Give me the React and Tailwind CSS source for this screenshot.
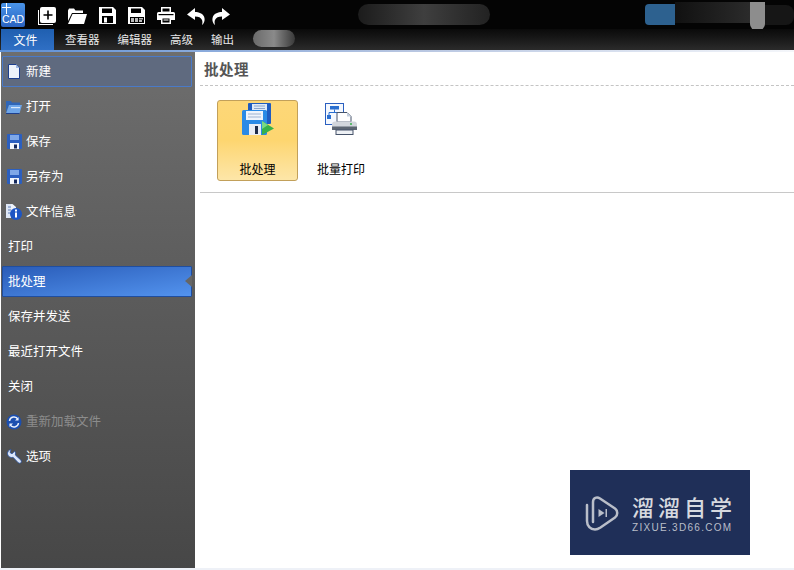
const cjk = "font-['Noto_Sans_CJK_SC',sans-serif]"

function CadLogo() {
    return (
        <div className="w-[24px] h-[24px] rounded-[2px] bg-gradient-to-b from-[#4a94e8] to-[#2a62c0] relative overflow-hidden ml-[1px] mt-[3px] shrink-0">
            <div className="absolute left-[5px] top-0 w-[1px] h-[11px] bg-white"></div>
            <div className="absolute left-[1px] top-[4px] w-[9px] h-[1px] bg-white"></div>
            <p className="absolute left-[1px] top-[10px] text-[10.500px] leading-[13px] text-white font-['Liberation_Sans',sans-serif]">CAD</p>
        </div>
    )
}

function NewIcon() {
    return (
        <svg width="18" height="18" viewBox="0 0 18 18">
            <path d="M0 3v15h15v-1H1V3z" fill="#fff" />
            <rect x="2" y="0" width="16" height="16" rx="2" fill="#fff" />
            <path d="M9.2 3.5h1.6v3.7h3.7v1.6h-3.7v3.7H9.2V8.8H5.5V7.2h3.7z" fill="#000" />
        </svg>
    )
}

function OpenIcon() {
    return (
        <svg width="19" height="16" viewBox="0 0 19 16">
            <path d="M0 2.5 1 .5h5l1.5 2H15v2.500H4L0 13z" fill="#fff" />
            <path d="M4.500 6H19l-3 10H0z" fill="#fff" />
        </svg>
    )
}

function SaveIcon({ pdf }) {
    return (
        <svg width="17" height="17" viewBox="0 0 17 17">
            <path d="M0 0h14l3 3v14H0z" fill="#fff" />
            <rect x="3" y="1.500" width="10" height="4.500" fill="#000" />
            {pdf
                ? <rect x="2" y="10" width="14" height="6" fill="#000" />
                : <rect x="3" y="9" width="11" height="7" fill="#000" />}
            {pdf
                ? <path d="M3 11h3v4H3zM7 11h3v4H7zM11 11h4v1.500h-4zM11 13h3v2h-3z" fill="#bbb" />
                : <rect x="5" y="10.500" width="3" height="5" fill="#fff" />}
        </svg>
    )
}

function PrintIcon() {
    return (
        <svg width="18" height="17" viewBox="0 0 18 17">
            <path d="M4 0h10v5H4zM1.500 5h15A1.500 1.500 0 0 1 18 6.500V13h-4v-2H4v2H0V6.500A1.500 1.500 0 0 1 1.500 5z" fill="#fff" />
            <rect x="5.500" y="1.500" width="7" height="3" fill="#000" />
            <path d="M4 10h10v7H4z" fill="#fff" />
            <rect x="5.500" y="11.500" width="7" height="4" fill="#000" />
            <rect x="6.500" y="12.500" width="5" height="1" fill="#fff" />
            <rect x="1.500" y="7" width="15" height="1.200" fill="#000" />
        </svg>
    )
}

function UndoIcon({ flip }) {
    return (
        <svg width="18" height="18" viewBox="0 0 18 18" className={flip ? "-scale-x-100" : ""}>
            <path d="M8 1 0 7.500 8 13V9.500c3.500 0 6 1 7 3.500.6 1.500.5 3 0 5 2.500-2 3.300-5.500 2-8.500C15.700 6.500 12 5 8 5z" fill="#fff" />
        </svg>
    )
}

function DocIcon() {
    return (
        <svg width="12" height="15" viewBox="0 0 12 15">
            <path d="M.5.5H8L11.500 4v10.500H.5z" fill="#eef3fb" stroke="#1d3f8f" />
            <path d="M8 .5V4h3.500z" fill="#9db8e6" />
        </svg>
    )
}

function FolderIcon() {
    return (
        <svg width="16" height="14" viewBox="0 0 16 14">
            <path d="M0 1h5l1 1.500h8V5H3L0 13z" fill="#2f66b8" />
            <path d="M3 5h13l-2.500 8.500H0z" fill="#6ea6ea" />
            <path d="M5 7h9v1.200H5z" fill="#d8e8fb" />
            <path d="M0 13h13.500v1H0z" fill="#1d3f8f" />
        </svg>
    )
}

function DiskIcon() {
    return (
        <svg width="15" height="15" viewBox="0 0 15 15">
            <rect width="15" height="15" rx="1" fill="#2b5fc0" />
            <rect x="3" y="1" width="9" height="5" fill="#7fa8e8" />
            <rect x="3" y="9" width="9" height="6" fill="#f2f6fc" />
            <rect x="7" y="10.500" width="3" height="4" fill="#14285c" />
        </svg>
    )
}

function InfoIcon() {
    return (
        <svg width="16" height="16" viewBox="0 0 16 16">
            <path d="M.5 0h6L10 3v5H.5z" fill="#eef3fb" />
            <rect x="0" y="0" width="5" height="14" fill="#dfe8f7" />
            <path d="M2 3h3M2 6h3M2 9h3" stroke="#5f7fb8" />
            <circle cx="10" cy="10" r="6" fill="#1d55c4" />
            <rect x="9" y="5.500" width="2" height="2" fill="#fff" />
            <rect x="9" y="8.500" width="2" height="5" fill="#fff" />
        </svg>
    )
}

function ReloadIcon() {
    return (
        <svg width="16" height="16" viewBox="0 0 16 16">
            <circle cx="8" cy="8" r="7.500" fill="#1c4fb0" />
            <path d="M3.500 7A4.500 4.500 0 0 1 12 5.500M12.500 9A4.500 4.500 0 0 1 4 10.500" stroke="#e6eefb" strokeWidth="1.500" fill="none" />
            <path d="M12.500 3v3.500H9zM3.500 13V9.500H7z" fill="#e6eefb" />
        </svg>
    )
}

function WrenchIcon() {
    return (
        <svg width="16" height="15" viewBox="0 0 16 15">
            <path d="M5 .5C3 .8 1.500 2.500 1.500 4.500c0 2.200 1.800 4 4 4 .6 0 1 0 1.500-.3l5 5.300c1 1 2.500 1 3 0 .6-.8.500-1.800-.3-2.600L9.300 6c.5-1.400.2-2.800-.6-3.800L6 4.800 4 3.500z" fill="#dbe6fa" stroke="#27509f" strokeWidth="0.800" />
        </svg>
    )
}

function BatchIcon() {
    return (
        <svg width="32" height="32" viewBox="0 0 32 32">
            <rect x="6" y="0" width="23" height="21" rx="1" fill="#1f5cc0" />
            <rect x="10" y="1" width="15" height="7" fill="#dfe9f7" />
            <path d="M12 3h11M12 5.500h11" stroke="#8aa4cc" />
            <rect x="0" y="7" width="25" height="25" rx="1.500" fill="#2a8ae6" />
            <rect x="4" y="8" width="17" height="9" fill="#eef3fb" />
            <path d="M6 11h13M6 14h13" stroke="#9fb2d0" />
            <rect x="7" y="21" width="12" height="11" fill="#e8edf5" />
            <rect x="13" y="23" width="3" height="8" fill="#1e2c48" />
            <path d="M20 18 32 25.500 20 32z" fill="#36b24a" />
            <path d="M20 18 26 22 20 26z" fill="#79d884" />
        </svg>
    )
}

function BatchPrintIcon() {
    return (
        <svg width="32" height="32" viewBox="0 0 32 32">
            <rect x="0.500" y="0.500" width="18" height="21" fill="#f4f8fe" stroke="#2a5fc0" />
            <rect x="5" y="3" width="9" height="3.500" fill="#2a6fd0" />
            <rect x="2" y="12" width="4" height="4" fill="#2a6fd0" />
            <path d="M9.500 6.500V9M4 12V9.500h11V12" stroke="#2a6fd0" fill="none" />
            <path d="M12 9.500h10l4 4V19H12z" fill="#fff" stroke="#46536a" />
            <path d="M22 9.500v4h4z" fill="#c4cfdf" />
            <path d="M10 18.500h19a3 3 0 0 1 3 3V27H7v-5.500a3 3 0 0 1 3-3z" fill="#d2d6dc" />
            <rect x="7" y="23.500" width="25" height="3.500" fill="#5d6672" />
            <circle cx="26" cy="21" r="1" fill="#36b24a" />
            <rect x="11" y="27" width="17" height="4.500" fill="#eef1f5" stroke="#46536a" />
        </svg>
    )
}

function WatermarkIcon() {
    return (
        <svg width="34" height="36" viewBox="0 0 34 36" fill="none">
            <path d="M2 10v16c0 5 3.500 8.500 8 8.500 2 0 3.500-.7 5.500-2L30 22.500c3-2 3-7 0-9L15 3.500C12 1.500 8 2.500 8 7v20" stroke="#b9bec9" strokeWidth="2.500" strokeLinecap="round" />
            <path d="M13.500 14v8l6-4z" fill="#b9bec9" />
            <rect x="20.500" y="14" width="1.500" height="8" fill="#b9bec9" />
        </svg>
    )
}

const menuItems = [
    { label: "新建", icon: <DocIcon />, hover: true },
    { label: "打开", icon: <FolderIcon /> },
    { label: "保存", icon: <DiskIcon /> },
    { label: "另存为", icon: <DiskIcon /> },
    { label: "文件信息", icon: <InfoIcon /> },
    { label: "打印" },
    { label: "批处理", selected: true },
    { label: "保存并发送" },
    { label: "最近打开文件" },
    { label: "关闭" },
    { label: "重新加载文件", icon: <ReloadIcon />, disabled: true },
    { label: "选项", icon: <WrenchIcon /> },
]

function SideItem({ item }) {
    let box = "border border-transparent"
    if (item.hover) box = "border border-[#4a7ac8] bg-[#5f6a7f]"
    if (item.selected) box = "border border-[#1f4ea0] bg-gradient-to-br from-[#2a5cb8] to-[#5393ee]"
    return (
        <div className={`relative flex items-center h-[31px] mb-[4px] mr-[3px] ml-[1px] rounded-[1px] ${box}`}>
            {item.icon
                ? <div className="w-[22px] flex justify-center shrink-0">{item.icon}</div>
                : <div className="w-[4px] shrink-0"></div>}
            <p className={`text-[12.5px] ml-[1px] ${item.disabled ? "text-[#8c8c8c]" : "text-white"}`}>{item.label}</p>
            {item.selected && (
                <div className="absolute right-[-1px] top-[8px] w-0 h-0 border-y-[6px] border-y-transparent border-r-[7px] border-r-[#666666]"></div>
            )}
        </div>
    )
}

export default function App() {
    return (
        <div className={`w-[794px] h-[570px] flex flex-col overflow-hidden bg-white relative ${cjk}`}>
            {/* Top toolbar */}
            <div className="h-[29px] bg-[#040404] flex shrink-0">
                <CadLogo />
                <div className="flex items-center gap-[12px] ml-[13px] mt-[2px] h-[27px]">
                    <NewIcon />
                    <OpenIcon />
                    <SaveIcon />
                    <SaveIcon pdf />
                    <PrintIcon />
                    <div className="flex gap-[7px]">
                        <UndoIcon />
                        <UndoIcon flip />
                    </div>
                </div>
                {/* blurred out title */}
                <div className="ml-[128px] mt-[4px] h-[21px] w-[132px] rounded-full bg-gradient-to-r from-[#1c1c1c] via-[#3f3f3f] to-[#222222]"></div>
                {/* blurred out account */}
                <div className="ml-[155px] mt-[4px] h-[21px] w-[30px] rounded-l-[4px] bg-[#2d618f]"></div>
                <div className="mt-[2px] h-[21px] w-[75px] bg-gradient-to-r from-[#111111] to-[#2b2b2b]"></div>
                <div className="mt-[2px] h-[28px] w-[15px] rounded-b-[6px] bg-[#8d8d8d]"></div>
                <div className="mt-[5px] h-[20px] w-[29px] rounded-r-[8px] bg-[#161616]"></div>
            </div>

            {/* Tabs */}
            <div className="h-[21px] bg-gradient-to-b from-[#0a0a0a] to-[#2b2b2b] flex items-center shrink-0 text-[12px]">
                <div className="w-[53px] h-[21px] ml-[1px] pr-[4px] bg-gradient-to-b from-[#1f5fb0] to-[#2f6fc4] text-white text-[12px] flex items-center justify-center">文件</div>
                <p className="text-[#e8e8e8] ml-[11px] text-[11.500px]">查看器</p>
                <p className="text-[#e8e8e8] ml-[18px] text-[11.500px]">编辑器</p>
                <p className="text-[#e8e8e8] ml-[18px] text-[11.500px]">高级</p>
                <p className="text-[#e8e8e8] ml-[18px] text-[11.500px]">输出</p>
                <div className="ml-[19px] w-[42px] h-[17px] mb-[3px] rounded-full bg-gradient-to-r from-[#6a6a6a] via-[#8a8a8a] to-[#3a3a3a]"></div>
            </div>
            <div className="h-[2px] shrink-0 bg-gradient-to-r from-[#5c8fd6] via-[#b5c4e0] to-[#f4f6fa]"></div>

            {/* Main */}
            <div className="flex flex-1 min-h-0">
                <div className="w-[194px] ml-[1px] mb-[2px] pt-[4px] bg-gradient-to-b from-[#6e6e6e] to-[#474747] shrink-0">
                    {menuItems.map((item) => <SideItem key={item.label} item={item} />)}
                </div>

                <div className="flex-1 pl-[5px] bg-white">
                    <div className="h-[34px] border-b border-dashed border-[#c4c4c4] flex items-center pl-[4px]">
                        <p className="text-[14.500px] font-bold text-[#555555] tracking-[0.5px]">批处理</p>
                    </div>
                    <div className="h-[107px] border-b border-[#c8c8c8] pl-[17px] pt-[14px] flex">
                        <div className="w-[81px] h-[81px] rounded-[3px] border border-[#c2a05a] bg-gradient-to-b from-[#fdd778] via-[#fdd670] to-[#fde6a8] flex flex-col items-center">
                            <div className="mt-[2px]"><BatchIcon /></div>
                            <p className="text-[12px] text-black mt-[25px]">批处理</p>
                        </div>
                        <div className="w-[86px] h-[81px] flex flex-col items-center">
                            <div className="mt-[3px]"><BatchPrintIcon /></div>
                            <p className="text-[12px] text-black mt-[25px]">批量打印</p>
                        </div>
                    </div>
                </div>
            </div>
            <div className="h-[2px] bg-[#eef1f7] absolute left-0 right-0 bottom-0"></div>

            {/* Watermark */}
            <div className="absolute left-[570px] top-[470px] w-[180px] h-[85px] bg-[#1f2f58] flex items-center pl-[15px]">
                <WatermarkIcon />
                <div className="ml-[13px] mb-[2px] flex flex-col items-start">
                    <p className="text-[22px] leading-[32px] font-medium text-[#d6d9df] tracking-[4px] whitespace-nowrap">溜溜自学</p>
                    <p className="text-[10px] leading-[12px] text-[#b9bec9] tracking-[1.300px] whitespace-nowrap font-['Liberation_Sans',sans-serif]">ZIXUE.3D66.COM</p>
                </div>
            </div>
        </div>
    )
}
